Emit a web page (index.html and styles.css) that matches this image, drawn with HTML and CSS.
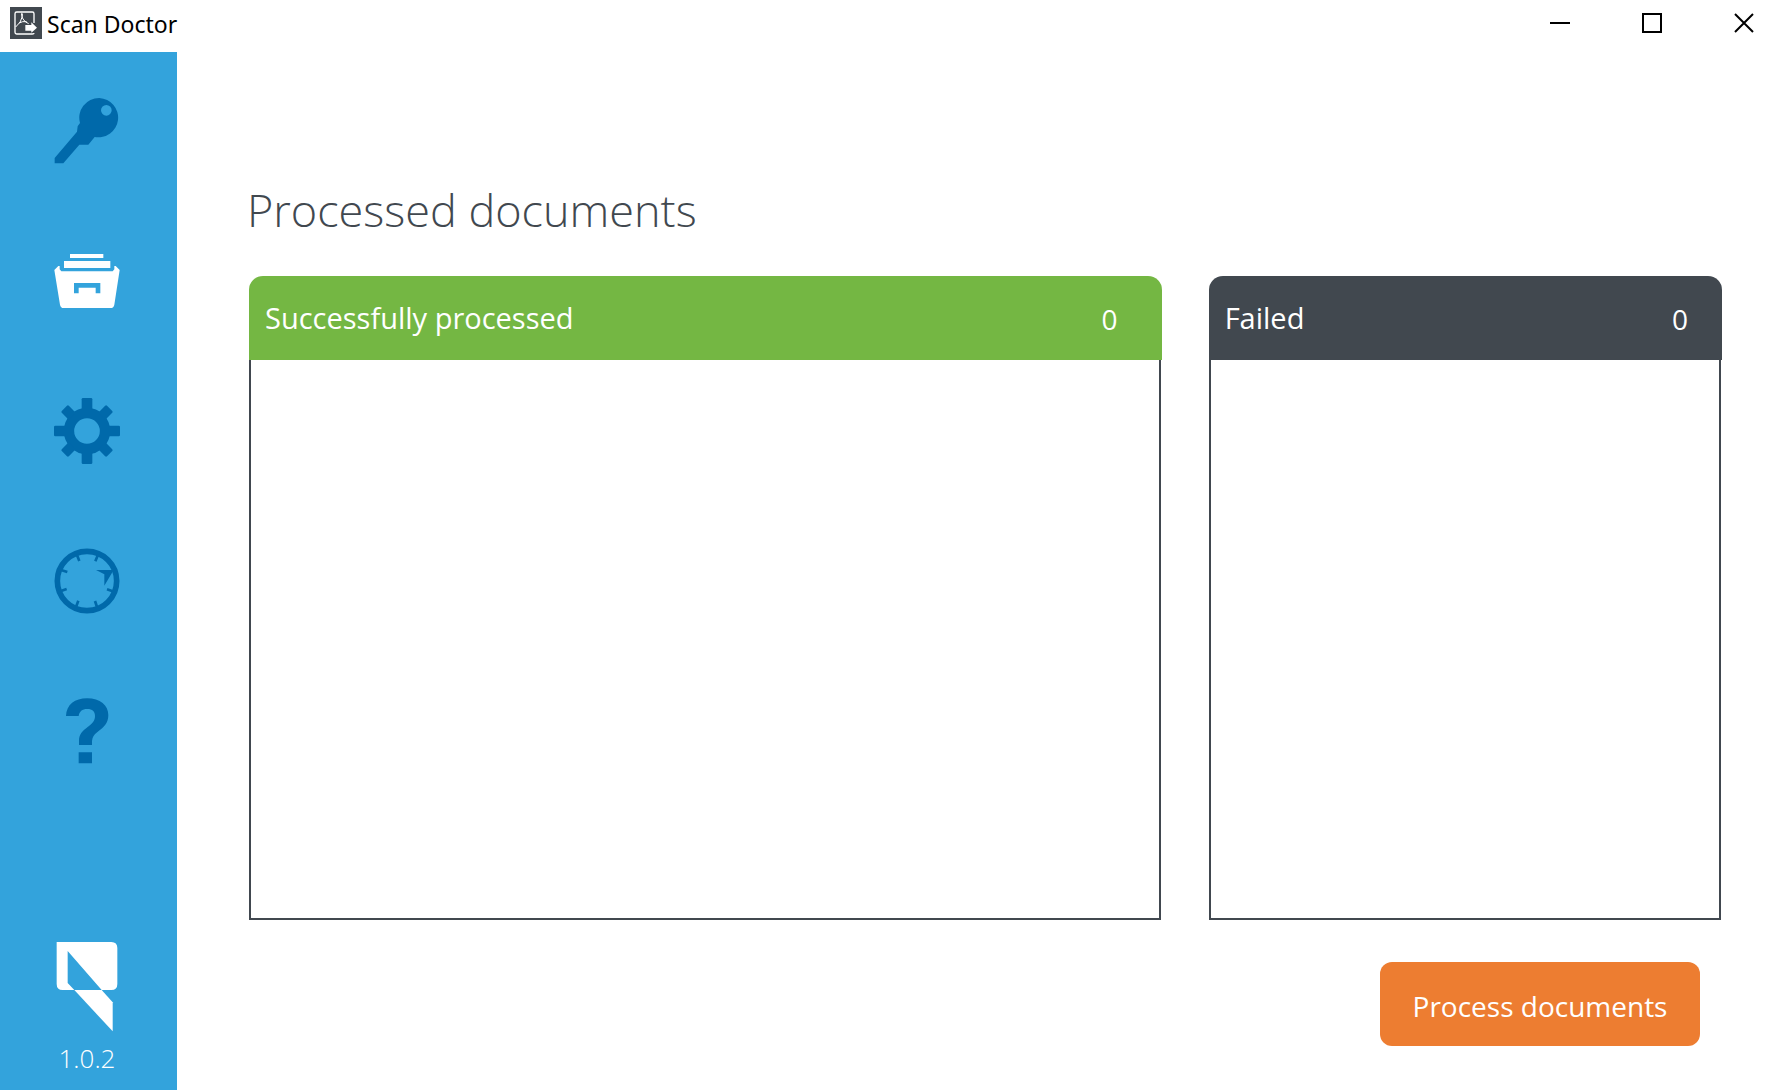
FILE: index.html
```html
<!DOCTYPE html>
<html lang="en">
<head>
<meta charset="utf-8">
<title>Scan Doctor</title>
<link rel="stylesheet" href="styles.css">
</head>
<body>
<header class="titlebar">
  <svg class="app-icon" viewBox="0 0 96 96" aria-hidden="true">
    <rect width="96" height="96" fill="#41484f"/>
    <path d="M72 48V20q0-5-5-5H20q-5 0-5 5v56q0 5 5 5h47q5 0 5-3" fill="none" stroke="#fff" stroke-width="4"/>
    <path d="M17 60Q34 46 37 28Q38 17 35 19Q32 24 39 36Q45 46 56 50M27 48Q38 42 50 44" fill="none" stroke="#fff" stroke-width="3"/>
    <path d="M46 54h18v-8l17 16-17 15v-6H46z" fill="#fff"/>
  </svg>
  <span class="app-name">Scan Doctor</span>
  <div class="window-controls">
    <button class="window-button" type="button" aria-label="Minimize"><svg viewBox="0 0 20 20"><path d="M0 10h20"/></svg></button>
    <button class="window-button" type="button" aria-label="Maximize"><svg viewBox="0 0 20 20"><path d="M1 1h18v18H1z"/></svg></button>
    <button class="window-button" type="button" aria-label="Close"><svg viewBox="0 0 20 20"><path d="M1 1l18 18M19 1L1 19"/></svg></button>
  </div>
</header>
<div class="workspace">
  <aside class="sidebar">
    <nav class="nav">
      <button class="nav-button" type="button" aria-label="License">
        <svg viewBox="162 294 198 198"><path fill-rule="evenodd" d="M298 294a60 59 0 1 1-14 117l-19 23h-27l-48 56h-26v-16l67-79 2-16 7-10a60 59 0 0 1 58-75zM319 315a16 16 0 1 0 0 32a16 16 0 0 0 0-32z"/></svg>
      </button>
      <button class="nav-button active" type="button" aria-label="Documents">
        <svg viewBox="72 54 198 198"><path fill-rule="evenodd" d="M120 72h100v12H120zM102 93h139v21H102zM73 120l12-12h4v10l5 6h154l5-6v-10h4l12 12-16 104q-2 10-11 10H101q-9 0-11-10zM132 159v31h14v-17h51v17h14v-31z"/></svg>
      </button>
      <button class="nav-button" type="button" aria-label="Settings">
        <svg viewBox="72 54 198 198">
          <circle cx="171" cy="153" r="54" fill="none" stroke="currentColor" stroke-width="31"/>
          <g><rect x="155" y="54" width="32" height="36" rx="4"/><rect x="155" y="216" width="32" height="36" rx="4"/><rect x="72" y="137" width="36" height="32" rx="4"/><rect x="234" y="137" width="36" height="32" rx="4"/></g>
          <g transform="rotate(45 171 153)"><rect x="156" y="57" width="30" height="34" rx="4"/><rect x="156" y="215" width="30" height="34" rx="4"/><rect x="75" y="138" width="34" height="30" rx="4"/><rect x="233" y="138" width="34" height="30" rx="4"/></g>
        </svg>
      </button>
      <button class="nav-button" type="button" aria-label="History">
        <svg viewBox="72 54 198 198">
          <circle cx="171" cy="153" r="89" fill="none" stroke="currentColor" stroke-width="17"/>
          <path d="M140 73l8 20M204 74l-8 20M93 120l19 6M93 183l17-6M138 231l7-19M201 231l-6-18M248 184l-17-6" fill="none" stroke="currentColor" stroke-width="8"/>
          <path d="M198 120h53l-28 47v-34z"/>
        </svg>
      </button>
      <button class="nav-button" type="button" aria-label="Help">
        <svg viewBox="72 54 198 198"><path d="M108 108C109 74 135 55 171 55C211 55 235 76 235 105C235 130 221 142 205 154Q186 168 186 183V195H147V181C147 163 158 152 173 141C187 131 195 122 195 108C195 94 187 87 172 87C156 87 148 95 146 108ZM146 217h40v33h-40z"/></svg>
      </button>
    </nav>
    <div class="brand">
      <svg class="logo" viewBox="162 60 198 273" aria-hidden="true"><path fill-rule="evenodd" d="M170 63h164q18 0 18 18v108q0 18-18 18h-29L203 90v96l20 21h-35q-18 0-18-18z"/><path d="M223 207h82l33 37v87z"/></svg>
      <span>1.0.2</span>
    </div>
  </aside>
  <main class="content">
    <h1 class="page-title">Processed documents</h1>
    <div class="panels">
      <section class="panel">
        <div class="panel-header success"><h2>Successfully processed</h2><span class="count">0</span></div>
        <div class="panel-body"></div>
      </section>
      <section class="panel">
        <div class="panel-header failed"><h2>Failed</h2><span class="count">0</span></div>
        <div class="panel-body"></div>
      </section>
    </div>
    <div class="actions"><button class="primary" type="button">Process documents</button></div>
  </main>
</div>
</body>
</html>
```
FILE: styles.css
```css
* { box-sizing: border-box; }

body {
  margin: 0;
  min-height: 100vh;
  display: flex;
  flex-direction: column;
  background: #fff;
  color: #41484f;
  font-family: "Open Sans", "Noto Sans", sans-serif;
}

button {
  border: 0;
  background: none;
  font: inherit;
}

.titlebar {
  height: 52px;
  display: flex;
  align-items: flex-start;
  color: #000;
}

.app-icon {
  width: 32px;
  height: 32px;
  margin: 7px 5px 0 10px;
}

.app-name {
  margin-top: 8px;
  font-family: "Noto Sans", sans-serif;
  font-size: 23px;
  line-height: 32px;
}

.window-controls {
  display: flex;
  gap: 8px;
  margin-left: auto;
}

.window-button {
  width: 84px;
  height: 46px;
  padding: 0;
  display: grid;
  place-items: center;
}

.window-button svg {
  width: 20px;
  height: 20px;
  fill: none;
  stroke: #000;
  stroke-width: 2;
}

.workspace {
  flex: 1;
  display: flex;
}

.sidebar {
  flex: none;
  width: 177px;
  padding: 4px 3px 14px 0;
  display: flex;
  flex-direction: column;
  justify-content: space-between;
  background: #33a3dc;
}

.nav {
  display: flex;
  flex-direction: column;
}

.nav-button {
  height: 150px;
  padding: 0;
  display: grid;
  place-items: center;
  color: #0069aa;
}

.nav-button.active { color: #fff; }

.nav-button svg {
  width: 66px;
  height: 66px;
  fill: currentColor;
}

.brand {
  display: flex;
  flex-direction: column;
  align-items: center;
  gap: 8px;
  color: #fff;
  font-size: 26px;
  font-weight: 300;
  line-height: 36px;
}

.logo {
  width: 66px;
  height: 91px;
  fill: #fff;
}

.content {
  flex: 1;
  display: flex;
  flex-direction: column;
  padding: 124px 64px 44px 70px;
}

.page-title {
  margin: 0 0 32px;
  font-size: 45px;
  font-weight: 300;
  line-height: 68px;
}

.panels {
  flex: 1;
  display: grid;
  grid-template-columns: 16fr 9fr;
  gap: 47px;
  padding-left: 2px;
}

.panel {
  display: flex;
  flex-direction: column;
}

.panel-header {
  height: 84px;
  padding: 0 34px 2px 16px;
  display: flex;
  align-items: center;
  justify-content: space-between;
  border-radius: 14px 14px 0 0;
  color: #fff;
}

.panel-header h2 {
  margin: 0;
  font-size: 29px;
  font-weight: 400;
}

.count {
  padding-top: 4px;
  font-size: 28px;
}

.success {
  padding-right: 44px;
  background: #74b743;
}

.failed { background: #41484f; }

.panel-body {
  flex: 1;
  margin-right: 1px;
  border: 2px solid #41484f;
  border-top: 0;
}

.actions {
  display: flex;
  justify-content: flex-end;
  padding: 42px 22px 0 0;
}

.primary {
  width: 320px;
  height: 84px;
  padding: 4px 0 0;
  border-radius: 12px;
  background: #ed7d31;
  color: #fff;
  font-size: 28px;
}
```
